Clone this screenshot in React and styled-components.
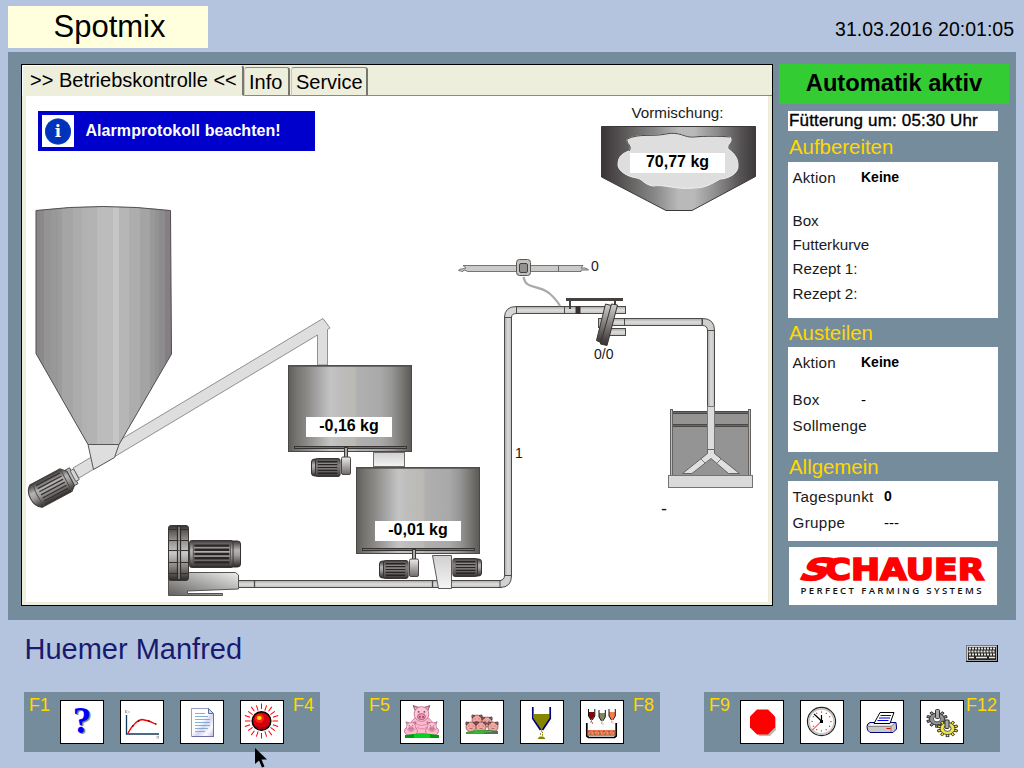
import React from 'react';
import styled, { createGlobalStyle } from 'styled-components';

const GlobalStyle = createGlobalStyle`
  * { box-sizing: border-box; }
  body {
    margin: 0;
    overflow: hidden;
    background: #b4c4de;
    font-family: "Liberation Sans", Arial, sans-serif;
    color: #000;
  }
  svg { display: block; }
`;

const Screen = styled.div`
  position: relative;
  width: 1024px;
  height: 768px;
  overflow: hidden;
  display: flex;
  flex-direction: column;
  background: #b4c4de;
`;
const Header = styled.header`
  height: 52px;
  padding: 6px 10px 4px 8px;
  display: flex;
  justify-content: space-between;
`;
const Title = styled.h1`
  margin: 0;
  width: 200px;
  height: 42px;
  padding-left: 3px;
  background: #ffffde;
  font-size: 31px;
  font-weight: 400;
  line-height: 42px;
  text-align: center;
`;
const Clock = styled.time`
  font-size: 19.5px;
  line-height: 46px;
`;
const Main = styled.main`
  display: flex;
  height: 568px;
  margin: 0 8px;
  padding: 12px 7px 14px 13px;
  background: #748c9b;
`;
const Control = styled.section`
  width: 752px;
  height: 542px;
  display: flex;
  flex-direction: column;
  border: 1px solid #000;
  background: #eeeedd;
`;
const Tabs = styled.nav`
  display: flex;
  align-items: flex-end;
  height: 31px;
  box-shadow: inset 0 -1px 0 #8a8a80;
`;
const Tab = styled.span`
  height: ${(p) => (p.$active ? 31 : 29)}px;
  width: ${(p) => p.$w}px;
  padding-left: ${(p) => (p.$active ? 7 : 4)}px;
  margin-right: ${(p) => (p.$active ? 0 : 1)}px;
  font-size: 20px;
  line-height: ${(p) => (p.$active ? 29 : 28)}px;
  white-space: nowrap;
  background: #eeeedd;
  border: 1px solid #8a8a80;
  border-top-color: ${(p) => (p.$active ? '#fff' : '#8a8a80')};
  border-left-color: ${(p) => (p.$active ? '#fff' : '#c8c8b8')};
  border-right: 2px solid #77776f;
  border-bottom-color: ${(p) => (p.$active ? '#eeeedd' : '#8a8a80')};
  border-radius: 3px 3px 0 0;
`;
const Canvas = styled.div`
  position: relative;
  width: 742px;
  height: 506px;
  margin-left: 4px;
  background: #fff;
`;
const Alarm = styled.div`
  position: absolute;
  left: 12px;
  top: 15px;
  width: 277px;
  height: 40px;
  padding: 4px;
  display: flex;
  gap: 11.5px;
  background: #0000cc;
  color: #fff;
  font-size: 16px;
  letter-spacing: 0.06px;
  font-weight: 700;
  line-height: 31px;
`;
const Tag = styled.span`
  position: absolute;
  left: ${(p) => p.$x - 26}px;
  top: ${(p) => p.$y - 96}px;
  font-size: ${(p) => p.$size || 15.2}px;
  line-height: 20px;
  white-space: nowrap;
  color: #1a1a1a;
`;
const Weight = styled(Tag)`
  width: ${(p) => p.$w}px;
  height: 20px;
  background: #fff;
  color: #000;
  font-size: 16px;
  font-weight: 700;
  line-height: 18px;
  text-align: center;
`;
const Side = styled.aside`
  width: 230px;
  margin-left: 6px;
  display: flex;
  flex-direction: column;
`;
const Mode = styled.div`
  height: 40px;
  background: #33cc33;
  font-size: 23.7px;
  font-weight: 700;
  line-height: 38px;
  text-align: center;
`;
const NextFeed = styled.div`
  width: 210px;
  height: 20px;
  margin: 7px 0 0 9px;
  padding-left: 1px;
  background: #fff;
  font-size: 17px;
  letter-spacing: 0.16px;
  line-height: 19px;
  white-space: nowrap;
  -webkit-text-stroke: 0.35px #000;
`;
const Heading = styled.h2`
  margin: 0 0 0 10px;
  height: ${(p) => p.$h}px;
  font-size: 20.4px;
  font-weight: 400;
  line-height: ${(p) => p.$h + 1}px;
  color: #ffd800;
`;
const Card = styled.div`
  width: 210px;
  height: ${(p) => p.$h}px;
  margin-left: 9px;
  padding: 4px 0 0 4px;
  background: #fff;
`;
const Row = styled.div`
  display: flex;
  height: 24px;
  margin-top: ${(p) => p.$gap || 0}px;
  font-size: 15.2px;
  line-height: 24px;
`;
const Label = styled.span`
  width: ${(p) => p.$w || 69}px;
  padding-left: 0.5px;
  letter-spacing: ${(p) => p.$track || 0}px;
  color: #1a1a1a;
`;
const Value = styled.span`
  font-size: ${(p) => (p.$plain ? 15 : 14)}px;
  font-weight: ${(p) => (p.$plain ? 400 : 700)};
  line-height: 23px;
`;
const Brand = styled.div`
  width: 208px;
  height: 58px;
  margin: 6px 0 0 10px;
  background: #fff;
`;
const UserBar = styled.div`
  height: 72px;
  padding: 0 26px 0 24.5px;
  display: flex;
  justify-content: space-between;
`;
const User = styled.div`
  font-size: 29px;
  line-height: 58px;
  color: #191970;
`;
const KeyboardSlot = styled.div`
  padding-top: 25px;
`;
const Keys = styled.footer`
  display: flex;
  gap: 44px;
  padding-left: 24px;
`;
const KeyGroup = styled.div`
  width: 296px;
  height: 60px;
  padding: 8px 0 0 5px;
  display: flex;
  flex: none;
  background: #748c9b;
`;
const KeyName = styled.span`
  flex: none;
  width: ${(p) => (p.$end ? 34 : 31)}px;
  margin-left: ${(p) => (p.$end ? p.$shift : 0)}px;
  font-size: 18px;
  line-height: 11px;
  color: #ffd800;
`;
const KeyButtons = styled.div`
  display: flex;
  flex: none;
  gap: 16px;
`;
const KeyButton = styled.button`
  width: 44px;
  height: 44px;
  padding: 0;
  border: 1px solid #000;
  background: #fff;
`;
const Pointer = styled.svg`
  position: absolute;
  left: 254px;
  top: 747px;
`;

const steps = (list) =>
  list.flatMap(([from, to, color], i) => [
    <stop key={`${i}a`} offset={from} stopColor={color} />,
    <stop key={`${i}b`} offset={to} stopColor={color} />,
  ]);

const siloBands = steps([
  [0, 0.03, '#898588'], [0.03, 0.06, '#8b8a8b'], [0.06, 0.11, '#959495'], [0.11, 0.16, '#989898'],
  [0.16, 0.195, '#9c9c9c'], [0.195, 0.27, '#a5a5a5'], [0.27, 0.34, '#acacac'], [0.34, 0.38, '#b1b1b1'],
  [0.38, 0.45, '#b3b3b3'], [0.45, 0.57, '#bcbcbc'], [0.57, 0.615, '#c6c6c6'], [0.615, 0.69, '#b6b6b6'],
  [0.69, 0.77, '#adadad'], [0.77, 0.84, '#a4a4a4'], [0.84, 0.88, '#999999'], [0.88, 0.91, '#949394'],
  [0.91, 0.95, '#8d8b8d'], [0.95, 1, '#857f84'],
]);

function Motor({ x, y, w = 30, h = 19, flip }) {
  const fins = [0.2, 0.35, 0.5, 0.65, 0.8];
  return (
    <g transform={flip ? `translate(${x + w} ${y}) scale(-1 1)` : `translate(${x} ${y})`}>
      <rect x="0.5" y="1" width={w * 0.25} height={h - 2} rx="3" fill="url(#shell)" stroke="#333" />
      <rect x={w * 0.15} y="0.5" width={w * 0.82} height={h - 1} rx="2" fill="url(#shell)" stroke="#3a3533" />
      {fins.map((f) => (
        <path key={f} d={`M${w * 0.22} ${h * f}H${w * 0.88}`} stroke="#292524" strokeWidth={h * 0.085} />
      ))}
      <path d={`M${w * 0.2} 2V${h - 2}M${w * 0.9} 2V${h - 2}`} stroke="#554f4d" strokeWidth="1" />
    </g>
  );
}

function Tank({ x, y }) {
  return (
    <g transform={`translate(${x} ${y})`}>
      <rect x="0.5" y="0.5" width="123" height="86" fill="url(#tank)" stroke="#4c4846" />
      <path d="M1 1H123" stroke="#55504e" strokeWidth="1.5" />
      <rect x="6.5" y="81.5" width="112" height="2" fill="#77716f" stroke="#373332" />
      <rect x="56.5" y="82.5" width="3" height="10" fill="#aaa" stroke="#3a3635" />
      <Motor x={23} y={93} />
      <rect x="53.5" y="92" width="9" height="17.5" rx="1.5" fill="url(#gearbox)" stroke="#494442" />
    </g>
  );
}

function Plant() {
  const line = '#4c4a48';
  return (
    <svg width="742" height="506" viewBox="26 96 742 506">
      <defs>
        <linearGradient id="silo">{siloBands}</linearGradient>
        <linearGradient id="tank">
          <stop offset="0" stopColor="#5f5d5a" />
          <stop offset="0.06" stopColor="#75736f" />
          <stop offset="0.14" stopColor="#898784" />
          <stop offset="0.24" stopColor="#a5a5a5" />
          <stop offset="0.34" stopColor="#c4c4c4" />
          <stop offset="0.42" stopColor="#bdbdbd" />
          <stop offset="0.54" stopColor="#bbb9b3" />
          <stop offset="0.56" stopColor="#b0b0b0" />
          <stop offset="0.75" stopColor="#a9a9a9" />
          <stop offset="0.84" stopColor="#969696" />
          <stop offset="0.92" stopColor="#7b7976" />
          <stop offset="1" stopColor="#5b5855" />
        </linearGradient>
        <linearGradient id="hopper">
          <stop offset="0" stopColor="#393536" />
          <stop offset="0.15" stopColor="#5b5858" />
          <stop offset="0.35" stopColor="#8a8989" />
          <stop offset="0.5" stopColor="#b9b9b9" />
          <stop offset="0.6" stopColor="#b9b9b9" />
          <stop offset="0.75" stopColor="#8c8b8b" />
          <stop offset="0.9" stopColor="#575455" />
          <stop offset="1" stopColor="#3d393a" />
        </linearGradient>
        <linearGradient id="shell" x2="0" y2="1">
          <stop offset="0" stopColor="#3c3838" />
          <stop offset="0.35" stopColor="#b5b5b5" />
          <stop offset="0.55" stopColor="#a09e9d" />
          <stop offset="1" stopColor="#2c2827" />
        </linearGradient>
        <linearGradient id="gearbox" x2="0" y2="1">
          <stop offset="0" stopColor="#ececec" />
          <stop offset="1" stopColor="#6e6a68" />
        </linearGradient>
        <linearGradient id="pipeH" x2="0" y2="1">
          <stop offset="0" stopColor="#a6a6a6" />
          <stop offset="0.5" stopColor="#dededc" />
          <stop offset="1" stopColor="#c2c2c0" />
        </linearGradient>
        <linearGradient id="pipeV">
          <stop offset="0" stopColor="#aaa" />
          <stop offset="0.5" stopColor="#dadada" />
          <stop offset="1" stopColor="#c0c0c0" />
        </linearGradient>
        <linearGradient id="disc" x2="0" y2="1">
          <stop offset="0" stopColor="#d0d0d0" />
          <stop offset="0.5" stopColor="#807d7c" />
          <stop offset="1" stopColor="#37312f" />
        </linearGradient>
        <linearGradient id="wheel" x2="0" y2="1">
          <stop offset="0" stopColor="#3a3634" />
          <stop offset="0.25" stopColor="#8d8b89" />
          <stop offset="0.5" stopColor="#c9c9c9" />
          <stop offset="0.75" stopColor="#858280" />
          <stop offset="1" stopColor="#2d2826" />
        </linearGradient>
        <linearGradient id="foot" x1="0" x2="1" y1="1" y2="0">
          <stop offset="0" stopColor="#625f5d" />
          <stop offset="0.5" stopColor="#a6a6a5" />
          <stop offset="1" stopColor="#ededed" />
        </linearGradient>
        <linearGradient id="cap" x2="0" y2="1">
          <stop offset="0" stopColor="#d0d0d0" />
          <stop offset="1" stopColor="#f4f4f4" />
        </linearGradient>
      </defs>

      {/* silo auger */}
      <path d="M73 468L323 318.5L330 328L327.5 329.5V365H317.5V335L79 478Z" fill="#dedede" stroke="#878585" strokeWidth="0.9" />
      <path d="M36 210.5Q103 202.5 170.5 210.5L171.5 354L119 444.5H88L36 353.5Z" fill="url(#silo)" stroke="#514d50" />
      <path d="M88 444.5H119L114.5 457.5L93.5 469.5Z" fill="#dedede" stroke="#575555" />
      <g transform="translate(53.5 486.5) rotate(-28)">
        <rect x="18" y="-9" width="5" height="18" fill="#b7b7b7" stroke="#444" strokeWidth="0.8" />
        <rect x="22" y="-6" width="4" height="12" fill="#d4d4d4" stroke="#555" strokeWidth="0.8" />
        <path d="M-20 -12.5H14L19 -7V9L14 13H-20Q-26 9 -26 0T-20 -12.5Z" fill="url(#shell)" stroke="#3f3b39" />
        <path d="M-17 -12Q-20 0 -17 13M14 -12V13" fill="none" stroke="#54504e" />
        {[-9, -5.5, -2, 1.5, 5, 8.5].map((y) => (
          <path key={y} d={`M-15 ${y}H12`} stroke="#37322f" strokeWidth="1.3" />
        ))}
      </g>

      {/* weighing tanks */}
      <Tank x={288} y={365} />
      <rect x="373.5" y="452.5" width="31" height="14" fill="url(#cap)" stroke="#6e6b69" />
      <Tank x={356} y={467} />

      {/* conveying line */}
      <rect x="238.5" y="580.5" width="263" height="7" fill="url(#pipeH)" stroke={line} />
      <path d="M254.5 580V588M432.5 580V588" stroke={line} strokeWidth="1.3" />
      <rect x="504.5" y="316.5" width="7" height="260" fill="url(#pipeV)" stroke={line} />
      <path d="M500 580.5Q504.5 580 504.5 575.5H511.5Q511.5 587.5 500 587.5Z" fill="#d2d2d2" stroke={line} />
      <path d="M504.5 317.5Q504.5 306.5 516.5 306.5V313.5Q511.5 313.5 511.5 317.5Z" fill="#d6d6d6" stroke={line} />
      <rect x="516.5" y="306.5" width="109" height="7" fill="url(#pipeH)" stroke={line} />
      <path d="M564.5 306V314" stroke={line} />
      <path d="M432.5 555.5H451.5V588.5H438.5Z" fill="url(#cap)" stroke="#5c5957" />
      <Motor x={452} y={558} flip />

      {/* blower */}
      <path d="M168.5 577L190 572.5H235.5L238.5 575V589L187.5 591V593.5H222.5V595.5H168.5Z" fill="url(#foot)" stroke="#555250" />
      <Motor x={188} y={540} w={53} h={28} flip />
      <rect x="168.5" y="525.5" width="20" height="55" rx="2.5" fill="url(#wheel)" stroke="#3a3634" />
      <path d="M169 529.5H188M169 540.5H188M169 550.5H188M169 562.5H188M169 573.5H188" stroke="#35302e" strokeWidth="1.2" />
      <path d="M177.5 526V580M180.5 526V580" stroke="#302c2a" strokeWidth="1.2" />
      <path d="M179 527V579" stroke="#aaa" />

      {/* air valve */}
      <path d="M458.5 270.5Q459 268.5 462 269L466 268L463 265.5H583L581 268H585Q588.5 269 588.5 270H581V271.5H468L464 270L463 271.5Z" fill="#cacac8" stroke="#777573" />
      <path d="M558.5 266V271" stroke="#666" />
      <path d="M523.5 277C526 290 537 284 549 293Q557 300 560 306" fill="none" stroke="#aaa" strokeWidth="2.2" />
      <rect x="516.5" y="259.5" width="14" height="16" rx="3" fill="#c0c0be" stroke="#5b5857" />
      <rect x="519.5" y="263.5" width="8" height="9" rx="1.5" fill="#93918f" stroke="#45413f" />

      {/* diverter */}
      <rect x="566" y="298" width="57" height="3" fill="#45413f" />
      <path d="M570 300V309M615 300V306" stroke="#45413f" strokeWidth="2" />
      <rect x="575.5" y="306" width="5" height="8" fill="#36312f" />
      <rect x="598.5" y="318.5" width="6" height="9" fill="#bbb" stroke={line} />
      <rect x="612" y="318.5" width="90" height="7" fill="url(#pipeH)" stroke={line} />
      <rect x="609" y="328.5" width="16.5" height="7" fill="url(#pipeH)" stroke={line} />
      <path d="M624.5 318V326" stroke={line} />
      <path d="M605.5 304L611.5 305.5L602.5 343.5L596.5 340.5Z" fill="url(#disc)" stroke="#383432" />
      <path d="M611.5 304L617.5 305L607 345.5L600.5 344Z" fill="url(#disc)" stroke="#383432" />

      {/* trough */}
      <rect x="672" y="411" width="77" height="65" fill="#949494" />
      <path d="M673 412.5H748M673 425.5H748" stroke="#4b4846" strokeWidth="3" />
      <path d="M673 412.5H748M673 425.5H748" stroke="#777" strokeWidth="0.7" />
      <rect x="670.5" y="409.5" width="2" height="66" fill="#bbb" stroke="#64615f" />
      <rect x="748.5" y="409.5" width="2" height="66" fill="#bbb" stroke="#64615f" />
      <rect x="668.5" y="475.5" width="84" height="12" fill="#dadada" stroke="#757371" />
      <path d="M702.5 318.5Q714.5 318.5 714.5 330.5H707.5Q707.5 325.5 702.5 325.5Z" fill="#cfcfcd" stroke={line} />
      <rect x="707.5" y="330.5" width="7" height="76" fill="url(#pipeV)" stroke={line} />
      <rect x="707.5" y="406.5" width="7" height="44" fill="#dcdcdc" stroke="#777" />
      <path d="M707.5 449.5H714.5V453.5L739.5 473.5H728.5L711 458.5L692 473.5H682.5L707.5 453.5Z" fill="#e0e0e0" stroke="#676563" />
      <path d="M701 459L705 463M721 459L717 463" stroke="#777" />

      {/* premix hopper */}
      <path d="M601.5 126.5H755.5V176.5L692 210.5H666L601.5 177Z" fill="url(#hopper)" stroke="#3c3939" />
      <path d="M627 139C640 133 652 137 666 134S684 138 694 137S720 136 730 137C734 142 726 144 728 149C734 153 738 158 738 165C739 174 727 179 720 179C710 185 704 188 694 188C676 190 665 184 653 186C643 184 644 180 637 178C628 177 618 171 618 165C618 155 624 153 629 151C633 146 626 144 627 139Z" fill="#dedede" stroke="#f0f0f0" />
      <path d="M629 151C633 146 626 144 627 139C640 133 652 137 666 134S684 138 694 137S720 136 730 137" fill="none" stroke="#454243" />
    </svg>
  );
}

function InfoIcon() {
  return (
    <svg width="32" height="32" viewBox="0 0 32 32">
      <rect width="32" height="32" fill="#fff" />
      <circle cx="16" cy="16.5" r="13" fill="#0033bb" />
      <circle cx="16" cy="16.5" r="12.5" fill="none" stroke="#1c55c4" strokeDasharray="1 1" />
      <text x="16" y="22.3" fill="#fff" fontFamily="DejaVu Serif, serif" fontWeight="700" fontSize="16.5" textAnchor="middle">i</text>
    </svg>
  );
}

const Icon = ({ children }) => (
  <svg width="42" height="42" viewBox="1 1 42 42">{children}</svg>
);

const HelpIcon = () => (
  <Icon>
    <g fontFamily="Liberation Serif, serif" fontWeight="700" fontSize="37" textAnchor="middle">
      <text x="23.5" y="34" fill="#888">?</text>
      <text x="22" y="33" fill="#0000ff">?</text>
    </g>
  </Icon>
);
const CurveIcon = () => (
  <Icon>
    <path d="M6.5 15V34H39" fill="none" stroke="#123a58" strokeWidth="1.3" />
    <path d="M8 33C12 26 16 20 22 19.5C27 20 32 22 35.5 24" fill="none" stroke="#f00000" strokeWidth="1.3" />
    <path d="M12 26h1.5M18 21h1.5M28 21h1.5M35 24h1.5" stroke="#700" strokeWidth="1.5" />
    <path d="M5.5 10v3M5.5 12l2-1.5M6 12l1.5 1M9 11v2M36.5 36.5l2-.5v2h-2" fill="none" stroke="#999" strokeWidth="0.8" />
  </Icon>
);
const DocIcon = () => (
  <Icon>
    <defs>
      <linearGradient id="paper" x2="1" y2="1">
        <stop offset="0.45" stopColor="#fff" />
        <stop offset="0.6" stopColor="#d6d6f2" />
        <stop offset="0.8" stopColor="#fbfbff" />
        <stop offset="1" stopColor="#b6b6e4" />
      </linearGradient>
    </defs>
    <path d="M11.5 8.5H28.5L33.5 13.5V36.5H11.5Z" fill="url(#paper)" stroke="#9a9ac8" />
    <path d="M12 36.5H34M33.5 14V37" stroke="#6d6da8" />
    <path d="M28.5 8.5V13.5H33.5Z" fill="#ccd8ee" stroke="#55739c" />
    <path d="M15 13.5H25M15 16.5H28M15 19.5H30M15 22.5H30M15 25.5H30M15 28.5H28M15 31.5H25" stroke="#7aa7d0" strokeWidth="0.9" />
  </Icon>
);
const AlarmIcon = () => (
  <Icon>
    {Array.from({ length: 20 }, (_, i) => (
      <path key={i} transform={`rotate(${i * 18} 21.5 21)`} d={i % 2 ? 'M33.5 21H39' : 'M32.5 21H38'} stroke="#f00" strokeWidth="1" />
    ))}
    <circle cx="21.5" cy="21" r="9.3" fill="#d40010" stroke="#000" strokeWidth="1.5" />
    <path d="M14 25A9 9 0 0 0 29 25A14 14 0 0 1 14 25Z" fill="#900018" />
    <circle cx="19.5" cy="18.5" r="4.5" fill="#ff2010" />
    <ellipse cx="19.3" cy="18" rx="2.4" ry="2" fill="#ffe800" />
  </Icon>
);

const PigFace = ({ x, y, s = 1 }) => (
  <g transform={`translate(${x} ${y}) scale(${s})`}>
    <path d="M-8 -8L-2 -6L-5 -1ZM8 -8L2 -6L5 -1Z" fill="#f0a0b8" stroke="#8d4a68" strokeWidth="0.9" />
    <ellipse rx="7" ry="7" fill="#ffc4d6" stroke="#b86b8c" strokeWidth="0.8" />
    <ellipse cy="2.5" rx="3.8" ry="2.8" fill="#f598b4" stroke="#9c4a6c" strokeWidth="0.8" />
    <path d="M-1.5 2v1.5M1.5 2v1.5M-3.5 -2h1.5M2 -2h1.5" stroke="#5b2440" strokeWidth="1.1" />
  </g>
);
const SowIcon = () => (
  <Icon>
    <path d="M9 34C8 23 14 16 21.5 16S36 23 35 34Z" fill="#ffb8ce" stroke="#c9809e" />
    <path d="M14 22Q21 29 30 22M17 27Q22 31 27 27" fill="none" stroke="#d88aa6" />
    <PigFace x={21.5} y={14} s={1.05} />
    <ellipse cx="11" cy="31" rx="6.5" ry="5" fill="#ffb8ce" stroke="#c9809e" />
    <ellipse cx="32" cy="31" rx="6.5" ry="5" fill="#ffb8ce" stroke="#c9809e" />
    <PigFace x={11} y={27} s={0.65} />
    <PigFace x={32} y={27} s={0.65} />
    <path d="M5 38V35Q21.5 32 39 35V38Z" fill="#009a10" />
    <path d="M14 38V34.5Q22 33 30 34.5V38Z" fill="#00d51c" />
  </Icon>
);
const Piglet = ({ x, y }) => (
  <g transform={`translate(${x} ${y})`}>
    <ellipse rx="5" ry="5" fill="#f2a69c" stroke="#754c54" strokeWidth="0.7" />
    <path d="M-5 -2L-5 -5L-2 -4.5ZM5 -2V-5L2 -4.5Z" fill="#d87f7e" stroke="#49313c" strokeWidth="0.9" />
    <path d="M-2.5 -1h1M1.5 -1h1M-1.5 1.5H1.5" stroke="#a3606a" strokeWidth="0.8" />
  </g>
);
const HerdIcon = () => (
  <Icon>
    <Piglet x={17} y={20} />
    <Piglet x={27} y={22} />
    <Piglet x={11} y={27} />
    <Piglet x={21} y={27} />
    <Piglet x={33} y={27} />
    <path d="M6 34V32Q21 28 38 31V34Z" fill="#42a03e" />
    <path d="M23 34L27 30.5L38 31V34Z" fill="#72477a" opacity="0.6" />
    <path d="M14 32.5L32 31.5" stroke="#37c72e" />
  </Icon>
);
const SiloIcon = () => (
  <Icon>
    <path d="M14 14H29.5V19L22.5 30H20.5L14 19Z" fill="#858500" />
    <path d="M12.8 7V18.5L20.5 30M30.2 7V18.5L22.5 30" fill="none" stroke="#000080" strokeWidth="1.7" />
    <path d="M21 31h1M22 32.5h1M20 34h1M22 35h1" stroke="#858500" strokeWidth="1.3" />
    <path d="M18 39V38L20 36.5H23L25 38V39Z" fill="#858500" />
  </Icon>
);
const MiniHopper = ({ x, y, color }) => (
  <g transform={`translate(${x} ${y})`}>
    <path d="M0.5 3H6.5V7L4 10.5H3L0.5 7Z" fill={color} />
    <path d="M0.5 0V7L3 11M6.8 0V7L4.3 11" fill="none" stroke="#111" strokeWidth="1" />
    <path d="M3.5 11.5v1M2.5 13h1M4 14h1" stroke={color} />
  </g>
);
const MixIcon = () => (
  <Icon>
    <MiniHopper x={8} y={9} color="#8b0000" />
    <MiniHopper x={18.5} y={10} color="#85855a" />
    <MiniHopper x={28.5} y={9} color="#ff7a48" />
    <path d="M8 30H35V36H8Z" fill="#e87550" />
    <path d="M8 31.5H35M9 34H35" stroke="#75754b" strokeWidth="1.4" strokeDasharray="2 3" />
    <path d="M9 33H34" stroke="#ffb083" strokeDasharray="1 2" />
    <path d="M6.8 23V36L8.5 37.5H34.5L36.2 36V23" fill="none" stroke="#000" strokeWidth="1.7" />
  </Icon>
);
const StopIcon = () => (
  <Icon>
    <path d="M18 12H30L36 18V30L30 36H19Z" fill="#bbb" />
    <path d="M17 9.5H28L35 16.5V27.5L28 34.5H17L10 27.5V16.5Z" fill="#f00" />
  </Icon>
);
const ClockIcon = () => (
  <Icon>
    <circle cx="21.5" cy="21.5" r="14" fill="#fff" stroke="#222" strokeWidth="1.3" />
    <circle cx="21.5" cy="21.5" r="12.6" fill="none" stroke="#c4c4c4" strokeWidth="1.6" />
    {Array.from({ length: 12 }, (_, i) => (
      <rect key={i} x="21" y="11.5" width="1.1" height="1.1" fill="#f00" transform={`rotate(${i * 30} 21.5 21.5)`} />
    ))}
    <path d="M21.5 21L12.5 30" stroke="#f00" />
    <path d="M21.5 21V15M21.5 21L14 14" stroke="#000" strokeWidth="1.2" />
    <rect x="20" y="20" width="3" height="3" fill="#000" />
  </Icon>
);
const PrintIcon = () => (
  <Icon>
    <path d="M7 26.5Q7 23.5 10 22.5H36L36.5 27V29L33 32.5H10L7.5 30Z" fill="#c9c9c9" stroke="#000080" strokeWidth="1" />
    <path d="M8 26.5H31L35 23M31 27V32" fill="none" stroke="#888" />
    <path d="M9 25.5H31L34 23H11Z" fill="#f2f2f2" />
    <path d="M14 23.5L20 12.5H34L30 23.5Z" fill="#fff" stroke="#000" />
    <path d="M20.5 15.5H31M19 18H30M17.5 20.5H28.5" stroke="#0000e0" strokeWidth="1.2" />
    <path d="M26.5 28.5H30.5" stroke="#e00" />
  </Icon>
);
const Gear = ({ x, y, color }) => (
  <g transform={`translate(${x} ${y}) scale(1 .8)`}>
    {Array.from({ length: 10 }, (_, i) => (
      <rect key={i} x="-1.3" y="-10.3" width="2.6" height="4" fill={color} stroke="#222" strokeWidth="0.9" transform={`rotate(${i * 36})`} />
    ))}
    <circle r="7.4" fill={color} stroke="#222" strokeWidth="0.9" />
    <circle r="6.6" fill={color} />
    <circle r="3.6" fill="#fff" stroke="#444" />
  </g>
);
const GearsIcon = () => (
  <Icon>
    <Gear x={17} y={19} color="#929292" />
    <rect x="15.5" y="9.5" width="4" height="9" rx="1" fill="#a8a8a8" stroke="#333" />
    <Gear x={27.5} y={28.5} color="#f0e640" />
    <rect x="25" y="20" width="4" height="8.5" rx="1" fill="#a8a8a8" stroke="#333" />
  </Icon>
);

function KeyboardIcon() {
  return (
    <svg width="32" height="17" viewBox="0 0 32 17">
      <rect width="32" height="17" fill="#000" />
      <rect width="31" height="16" fill="#777" />
      <rect x="1" y="1" width="29.5" height="14.5" fill="#d0d0d0" />
      <rect x="2" y="2" width="28" height="13" fill="#252525" />
      {[2.5, 5.5, 8.5].map((y, r) =>
        Array.from({ length: 9 }, (_, i) => (
          <rect key={`${r}-${i}`} x={3 + i * 3 - (r === 1 ? 0.5 : 0)} y={y} width="2" height="2" fill="#e5e5de" />
        ))
      )}
      <path d="M3 12.5H8M10 12.5H21M23 12.5H29" stroke="#e5e5de" strokeWidth="1.6" />
    </svg>
  );
}

function SchauerLogo() {
  return (
    <svg width="208" height="58" viewBox="0 0 208 58">
      <g fontFamily="DejaVu Sans, sans-serif" fontWeight="700" fontSize="30" fill="#f00" stroke="#f00" strokeWidth="1.7">
        <text x="0" y="0" transform="translate(8.5 32.5) skewX(-28)" textLength="28" lengthAdjust="spacingAndGlyphs">S</text>
        <text x="36.5" y="32.5" textLength="159" lengthAdjust="spacingAndGlyphs">CHAUER</text>
      </g>
      <text x="11.5" y="47.3" fontFamily="Open Sans, sans-serif" fontWeight="600" fontSize="9.6" fill="#111" textLength="181" lengthAdjust="spacing">PERFECT FARMING SYSTEMS</text>
    </svg>
  );
}

const keyGroups = [
  { from: 'F1', to: 'F4', shift: 9, icons: [HelpIcon, CurveIcon, DocIcon, AlarmIcon] },
  { from: 'F5', to: 'F8', shift: 9, icons: [SowIcon, HerdIcon, SiloIcon, MixIcon] },
  { from: 'F9', to: 'F12', shift: 2, icons: [StopIcon, ClockIcon, PrintIcon, GearsIcon] },
];

export default function App() {
  return (
    <Screen>
      <GlobalStyle />
      <Header>
        <Title>Spotmix</Title>
        <Clock>31.03.2016 20:01:05</Clock>
      </Header>
      <Main>
        <Control>
          <Tabs>
            <Tab $active $w={222}>&gt;&gt; Betriebskontrolle &lt;&lt;</Tab>
            <Tab $w={46}>Info</Tab>
            <Tab $w={77}>Service</Tab>
          </Tabs>
          <Canvas>
            <Plant />
            <Alarm>
              <InfoIcon />
              <span>Alarmprotokoll beachten!</span>
            </Alarm>
            <Tag $x={631.5} $y={102.5}>Vormischung:</Tag>
            <Weight $x={630} $y={153} $w={95}>70,77 kg</Weight>
            <Weight $x={306} $y={417} $w={86}>-0,16 kg</Weight>
            <Weight $x={375} $y={521} $w={86}>-0,01 kg</Weight>
            <Tag $x={591} $y={256} $size={14}>0</Tag>
            <Tag $x={594} $y={344} $size={14}>0/0</Tag>
            <Tag $x={515} $y={443} $size={14}>1</Tag>
            <Tag $x={661} $y={499} $size={18}>-</Tag>
          </Canvas>
        </Control>
        <Side>
          <Mode>Automatik aktiv</Mode>
          <NextFeed>Fütterung um: 05:30 Uhr</NextFeed>
          <Heading $h={31}>Aufbereiten</Heading>
          <Card $h={156}>
            <Row><Label $track={0.2}>Aktion</Label><Value>Keine</Value></Row>
            <Row $gap={19}><Label>Box</Label></Row>
            <Row><Label>Futterkurve</Label></Row>
            <Row><Label>Rezept 1:</Label></Row>
            <Row $gap={1}><Label>Rezept 2:</Label></Row>
          </Card>
          <Heading $h={29}>Austeilen</Heading>
          <Card $h={105}>
            <Row><Label $track={0.2}>Aktion</Label><Value>Keine</Value></Row>
            <Row $gap={13}><Label $track={0.3}>Box</Label><Value $plain>-</Value></Row>
            <Row $gap={2}><Label $track={0.3}>Sollmenge</Label></Row>
          </Card>
          <Heading $h={29}>Allgemein</Heading>
          <Card $h={60}>
            <Row><Label $w={92} $track={0.35}>Tagespunkt</Label><Value>0</Value></Row>
            <Row $gap={2}><Label $w={92} $track={0.35}>Gruppe</Label><Value $plain>---</Value></Row>
          </Card>
          <Brand><SchauerLogo /></Brand>
        </Side>
      </Main>
      <UserBar>
        <User>Huemer Manfred</User>
        <KeyboardSlot><KeyboardIcon /></KeyboardSlot>
      </UserBar>
      <Keys>
        {keyGroups.map((g) => (
          <KeyGroup key={g.from}>
            <KeyName>{g.from}</KeyName>
            <KeyButtons>
              {g.icons.map((Glyph, i) => (
                <KeyButton key={i}><Glyph /></KeyButton>
              ))}
            </KeyButtons>
            <KeyName $end $shift={g.shift}>{g.to}</KeyName>
          </KeyGroup>
        ))}
      </Keys>
      <Pointer width="16" height="21" viewBox="0 0 16 21">
        <path d="M1 1V17L5 13.5L8 20.5L10.5 19.5L7.5 12.5H13Z" fill="#000" />
      </Pointer>
    </Screen>
  );
}
